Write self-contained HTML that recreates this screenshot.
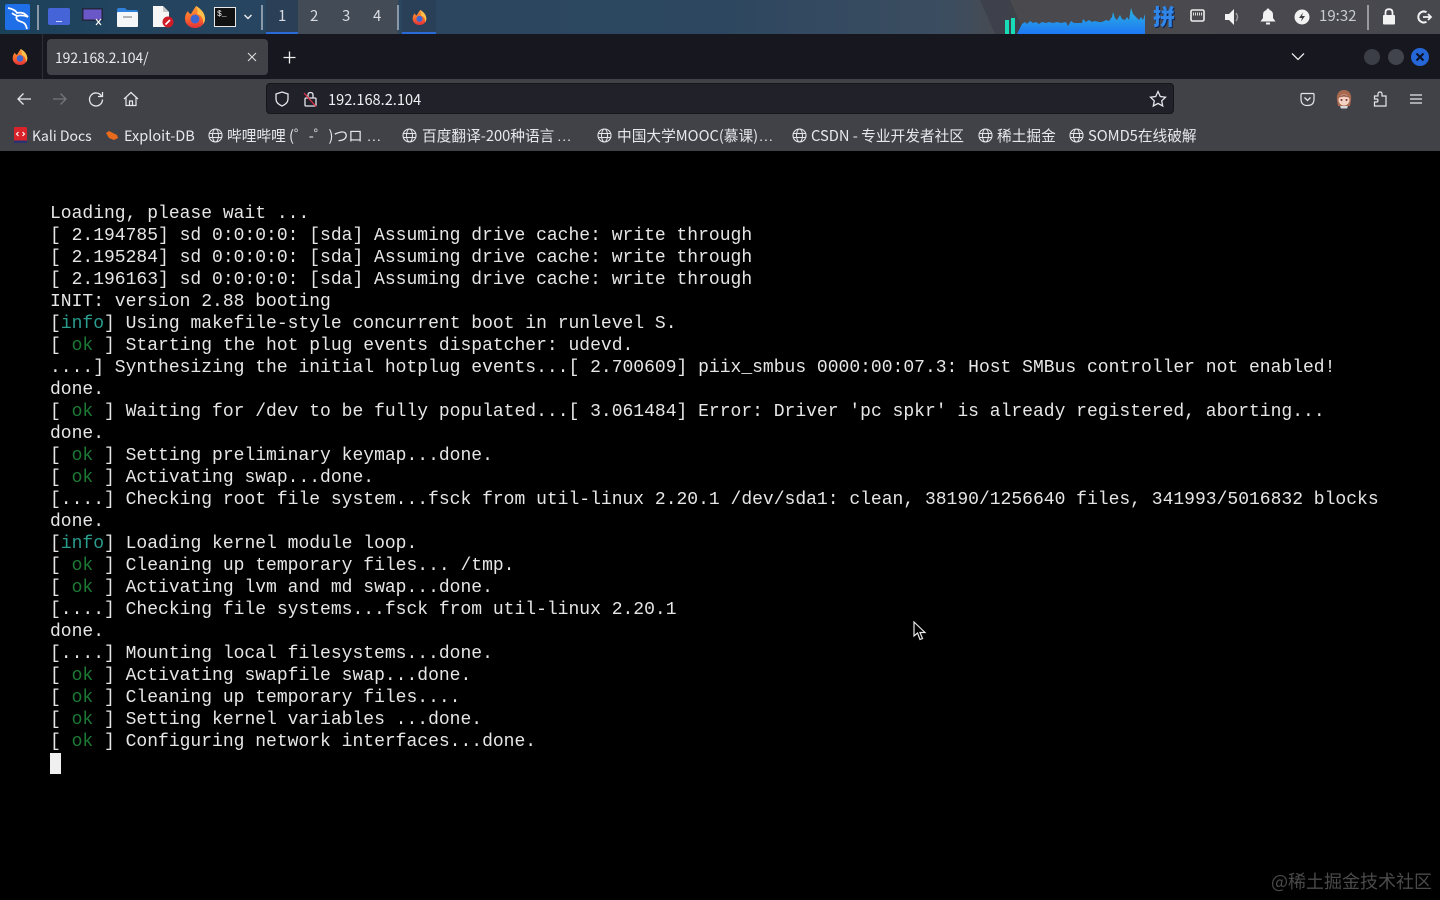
<!DOCTYPE html>
<html lang="zh"><head><meta charset="utf-8"><title>192.168.2.104</title>
<style>
html,body{margin:0;padding:0;background:#000;width:1440px;height:900px;overflow:hidden}
.a{position:absolute}
body{position:relative;font-family:"Noto Sans CJK SC","Liberation Sans",sans-serif;color:#f0f0f2}
#panel{left:0;top:0;width:1440px;height:34px;background:linear-gradient(90deg,#1b4159 0,#22445f 8%,#2b4660 25%,#2d4760 50%,#3c4d60 66%,#4a4a4e 70%,#47474e 100%);overflow:hidden}
#tabs{left:0;top:34px;width:1440px;height:45px;background:#17181f}
#tool{left:0;top:79px;width:1440px;height:72px;background:#414248}
#url{left:266px;top:83px;width:908px;height:31px;background:#202129;border:1px solid #15151a;border-radius:4px;box-sizing:border-box}
.t{white-space:nowrap;line-height:20px}
.bm{top:126px;font-size:14.700px;color:#e8e8ec;white-space:nowrap;line-height:20px}
.bm span{font-family:"Liberation Sans",sans-serif;font-size:14px;letter-spacing:1px;margin-left:1px}
#term{left:50px;top:203px;font:18px/22px "Liberation Mono",monospace;color:#e6e6e6;white-space:pre;margin:0}
#term i{font-style:normal;color:#1c7a36}#term b{font-weight:normal;color:#2a9d8f}
svg{position:absolute;overflow:visible}
</style></head><body>
<div id="panel" class="a">
 <div class="a" style="left:298px;top:0;width:100px;height:34px;background:#434b57"></div>
 <div class="a" style="left:266px;top:0;width:32px;height:34px;background:#2b3f57"></div>
 <div class="a" style="left:402px;top:0;width:34px;height:34px;background:#2a4058"></div>
 <svg style="left:985px;top:0" width="120" height="34" viewBox="0 0 120 34"><path d="M-5 0L25 0L40 34L10 34Z" fill="#3a3d48" opacity=".7"/></svg>
</div>
<div class="a" style="left:266px;top:32px;width:32px;height:2px;background:#2a6ad8"></div>
<div class="a" style="left:402px;top:32px;width:34px;height:2px;background:#2a6ad8"></div>

<svg style="left:5px;top:4px" width="25" height="26" viewBox="0 0 25 26"><rect width="25" height="26" rx="2" fill="#1f6fe8"/><path d="M3 4C8 5 11 7 12 9C16 8 20 9 23 13C19 11 16 11 12 12C10 15 13 17 17 18C20 19 21 21 22 25M7 9C9 11 11 11 12 12" fill="none" stroke="#fff" stroke-width="1.700"/></svg>
<div class="a" style="left:37px;top:5px;width:2px;height:25px;background:#8a98a8"></div>
<div class="a" style="left:48px;top:8px;width:22px;height:17px;background:#4464d8;border-radius:2px"></div>
<div class="a" style="left:56px;top:21px;width:6px;height:1px;background:#cdd6ff"></div>
<svg style="left:82px;top:8px" width="22" height="18" viewBox="0 0 22 18"><rect width="21" height="13" fill="#23283e"/><rect x="1.500" y="1.500" width="18" height="10" fill="#6a58c8"/><path d="M14 11l5 6M19 11l-5 6" stroke="#fff" stroke-width="1.200"/></svg>
<svg style="left:116px;top:7px" width="23" height="20" viewBox="0 0 23 20"><path d="M1 3Q1 1 3 1H9L11 3H20Q22 3 22 5V7H1Z" fill="#2f7fdc"/><rect x="1" y="5" width="21" height="15" rx="1" fill="#f4f6f8"/><rect x="7" y="9" width="9" height="2" fill="#b0b4b8"/></svg>
<svg style="left:152px;top:6px" width="22" height="22" viewBox="0 0 22 22"><path d="M1 0H11L17 6V21H1Z" fill="#f6f6f6"/><path d="M11 0V6H17Z" fill="#c8c8c8"/><circle cx="16" cy="16" r="5.500" fill="#d01c28"/><path d="M13.500 18.500L18 14" stroke="#fff" stroke-width="1.600"/></svg>
<svg width="0" height="0"><defs><linearGradient id="ff" x1="0" y1="0" x2="0" y2="1"><stop offset="0" stop-color="#ff9a3a"/><stop offset=".55" stop-color="#ff6a2a"/><stop offset="1" stop-color="#e0303a"/></linearGradient>
<g id="fx"><path d="M12 0C17 3 21 7 21 13A10 9 0 0 1 1 13C1 9 2.500 6.500 4 5C4.500 7 6 8 7 8C8 6 10 3 12 0Z" fill="url(#ff)"/><path d="M12 0C17 3 21 7 21 13C21 15 20 17 19 18C20 13 17 9 13 8C14 6 13.500 3 12 0Z" fill="#ffc04a"/><circle cx="11" cy="13" r="4.500" fill="#3f66d0"/></g></defs></svg>
<svg style="left:184px;top:6px" width="22" height="22" viewBox="0 0 22 22"><use href="#fx"/></svg>
<div class="a" style="left:214px;top:7px;width:22px;height:20px;background:#111;border:1px solid #e8e8e8;box-sizing:border-box;font:8px/10px 'Liberation Mono',monospace;color:#fff;padding:2px 0 0 2px">$_</div>
<svg style="left:243px;top:13px" width="10" height="8" viewBox="0 0 10 8"><path d="M1.500 2L5 5.500L8.500 2" fill="none" stroke="#e8e8e8" stroke-width="1.500"/></svg>
<div class="a" style="left:261px;top:5px;width:2px;height:25px;background:#8a98a8"></div>
<div class="a t" style="left:278px;top:6px;font-size:15px;color:#d8dce2">1</div>
<div class="a t" style="left:310px;top:6px;font-size:15px;color:#d8dce2">2</div>
<div class="a t" style="left:342px;top:6px;font-size:15px;color:#d8dce2">3</div>
<div class="a t" style="left:373px;top:6px;font-size:15px;color:#d8dce2">4</div>
<div class="a" style="left:397px;top:5px;width:2px;height:25px;background:#8a98a8"></div>
<svg style="left:412px;top:10px" width="15" height="15" viewBox="0 0 22 22"><use href="#fx"/></svg>

<div class="a" style="left:1005px;top:20px;width:4px;height:14px;background:#17dcb8"></div>
<div class="a" style="left:1011px;top:18px;width:4px;height:16px;background:#17dcb8"></div>
<svg style="left:1017px;top:8px" width="128" height="26" viewBox="0 0 128 26"><defs><linearGradient id="g" x1="0" y1="0" x2="0" y2="1"><stop offset="0" stop-color="#2cb4e0"/><stop offset="1" stop-color="#1e78f4"/></linearGradient></defs><path d="M0 26L5 16L8 14L10 16L13 13L16 15L19 14L22 16L25 14L29 15L32 14L36 15L40 14L44 15L49 14L51 18L54 13L57 15L61 15L65 15L66 11L69 14L72 12L75 14L78 13L82 14L85 14L89 12L92 13L95 9L96 4L98 10L100 12L103 7L105 11L108 12L110 9L112 12L114 0L116 6L118 8L120 10L122 12L124 9L126 12L128 6V26Z" fill="url(#g)"/></svg>

<div class="a" style="left:1153px;top:3px;font:900 22px/26px 'Noto Sans CJK SC',sans-serif;color:#2f86e8;text-shadow:1px 1px 0 #10204a">拼</div>
<svg style="left:1190px;top:9px" width="15" height="14" viewBox="0 0 15 14"><rect x="1" y="1" width="13" height="11" rx="1.500" fill="none" stroke="#eee" stroke-width="1.600"/><path d="M3.500 3.500V6.500M5.500 3.500V6.500M7.500 3.500V6.500M9.500 3.500V6.500M11.500 3.500V6.500" stroke="#ddd"/></svg>
<svg style="left:1224px;top:8px" width="18" height="18" viewBox="0 0 18 18"><path d="M1 6H5L10 1V17L5 12H1Z" fill="#f2f2f2"/><path d="M12 5Q15 9 12 13" fill="none" stroke="#999" stroke-width="1.500"/></svg>
<svg style="left:1260px;top:8px" width="16" height="17" viewBox="0 0 16 17"><path d="M8 0.500Q9.500 .5 9.500 2Q13 3 13 7V10L15.500 13.500H.5L3 10V7Q3 3 6.500 2Q6.500 .5 8 .5Z" fill="#f2f2f2"/><rect x="6" y="14.500" width="4" height="2" fill="#f2f2f2"/></svg>
<svg style="left:1294px;top:9px" width="16" height="16" viewBox="0 0 16 16"><circle cx="8" cy="8" r="7.500" fill="#f2f2f2"/><path d="M9 3.500L5 9H8L7 12.500L11 7H8Z" fill="#3a3a40"/></svg>
<div class="a t" style="left:1319px;top:6px;font-size:15px;color:#c8ccd2">19:32</div>
<div class="a" style="left:1367px;top:5px;width:2px;height:25px;background:#9a9a9e"></div>
<svg style="left:1382px;top:8px" width="14" height="17" viewBox="0 0 14 17"><rect x="1" y="7" width="12" height="9.500" rx="1" fill="#f2f2f2"/><path d="M3.500 7V4.500Q3.500 1.200 7 1.200Q10.500 1.200 10.500 4.500V7" fill="none" stroke="#f2f2f2" stroke-width="1.800"/></svg>
<svg style="left:1416px;top:9px" width="16" height="16" viewBox="0 0 16 16"><path d="M10.500 3.200A5.500 5.500 0 1 0 10.500 12.800" fill="none" stroke="#f2f2f2" stroke-width="2"/><path d="M7 8H15M12 5L15 8L12 11" fill="none" stroke="#f2f2f2" stroke-width="1.800"/></svg>

<div id="tabs" class="a"></div>
<svg style="left:12px;top:49px" width="16" height="16" viewBox="0 0 22 22"><use href="#fx"/></svg>
<div class="a" style="left:42px;top:34px;width:1px;height:45px;background:#2e2f36"></div>
<div class="a" style="left:47px;top:39px;width:221px;height:36px;background:#414248;border-radius:4px"></div>
<div class="a t" style="left:55px;top:48px;font-size:14px;color:#e8e8ec;letter-spacing:-.1px">192.168.2.104/</div>
<svg style="left:247px;top:52px" width="10" height="10" viewBox="0 0 10 10"><path d="M1 1L9 9M9 1L1 9" stroke="#ddd" stroke-width="1.100"/></svg>
<svg style="left:283px;top:51px" width="13" height="13" viewBox="0 0 13 13"><path d="M6.500 .5V12.500M.5 6.500H12.500" stroke="#eee" stroke-width="1.300"/></svg>
<svg style="left:1291px;top:52px" width="14" height="10" viewBox="0 0 14 10"><path d="M1 1.500L7 7.500L13 1.500" fill="none" stroke="#e8e8e8" stroke-width="1.300"/></svg>
<div class="a" style="left:1364px;top:49px;width:16px;height:16px;border-radius:50%;background:#3b3e46"></div>
<div class="a" style="left:1388px;top:49px;width:16px;height:16px;border-radius:50%;background:#41444c"></div>
<svg style="left:1411px;top:48px" width="18" height="18" viewBox="0 0 18 18"><circle cx="9" cy="9" r="9" fill="#2566d8"/><path d="M5.500 5.500L12.500 12.500M12.500 5.500L5.500 12.500" stroke="#0c1020" stroke-width="2"/></svg>

<div id="tool" class="a"></div>
<svg style="left:16px;top:92px" width="16" height="14" viewBox="0 0 16 14"><path d="M15 7H2M7.500 1.500L2 7L7.500 12.500" fill="none" stroke="#e6e6ea" stroke-width="1.300"/></svg>
<svg style="left:52px;top:92px" width="16" height="14" viewBox="0 0 16 14"><path d="M1 7H14M8.500 1.500L14 7L8.500 12.500" fill="none" stroke="#74757c" stroke-width="1.300"/></svg>
<svg style="left:88px;top:91px" width="16" height="16" viewBox="0 0 16 16"><path d="M13.500 5A6.500 6.500 0 1 0 14.500 8.500" fill="none" stroke="#e6e6ea" stroke-width="1.300"/><path d="M14.500 1V5.500H10" fill="none" stroke="#e6e6ea" stroke-width="1.300"/></svg>
<svg style="left:123px;top:91px" width="16" height="16" viewBox="0 0 16 16"><path d="M1 8L8 1.500L15 8M3 6.500V14.500H13V6.500M6.500 14.500V10H9.500V14.500" fill="none" stroke="#e6e6ea" stroke-width="1.200"/></svg>
<div id="url" class="a"></div>
<svg style="left:274px;top:91px" width="16" height="16" viewBox="0 0 16 16"><path d="M8 1L14 3V8Q14 12.500 8 15Q2 12.500 2 8V3Z" fill="none" stroke="#e6e6ea" stroke-width="1.300"/></svg>
<svg style="left:303px;top:91px" width="15" height="16" viewBox="0 0 15 16"><rect x="2" y="7" width="11" height="8" rx="1" fill="none" stroke="#e6e6ea" stroke-width="1.300"/><path d="M5 7V4Q5 1.500 7.500 1.500Q10 1.500 10 4V7" fill="none" stroke="#e6e6ea" stroke-width="1.300"/><path d="M1 2L13 15.500" stroke="#e0304a" stroke-width="1.300"/></svg>
<div class="a t" style="left:328px;top:90px;font-size:14.600px;color:#f0f0f4">192.168.2.104</div>
<svg style="left:1149px;top:90px" width="18" height="18" viewBox="0 0 18 18"><path d="M9 1.500L11.300 6.500L16.500 7.200L12.700 10.800L13.700 16L9 13.400L4.300 16L5.300 10.800L1.500 7.200L6.700 6.500Z" fill="none" stroke="#e6e6ea" stroke-width="1.300"/></svg>
<svg style="left:1300px;top:92px" width="15" height="15" viewBox="0 0 15 15"><path d="M2 1.500H13Q14 1.500 14 2.500V7Q14 13.500 7.500 13.500Q1 13.500 1 7V2.500Q1 1.500 2 1.500Z" fill="none" stroke="#e6e6ea" stroke-width="1.200"/><path d="M4.500 5.500L7.500 8.500L10.500 5.500" fill="none" stroke="#e6e6ea" stroke-width="1.300"/></svg>
<svg style="left:1335px;top:90px" width="18" height="19" viewBox="0 0 18 19"><path d="M9 0C14 0 17 4 16 10L15 16L3 16L2 10C1 4 4 0 9 0Z" fill="#a8694e"/><ellipse cx="9" cy="10" rx="5.500" ry="5.500" fill="#f2d2c2"/><path d="M3 8Q9 2 15 8Q9 5 3 8Z" fill="#8a4a38"/><circle cx="6.500" cy="10" r="1" fill="#7a3030"/><circle cx="11.500" cy="10" r="1" fill="#7a3030"/><path d="M5 16H13L12 18.500H6Z" fill="#d8d8d8"/></svg>
<svg style="left:1373px;top:91px" width="15" height="16" viewBox="0 0 15 16"><path d="M1.500 5H5V3Q5 1 7 1Q9 1 9 3V5H13V15H1.500V11H3.500Q5 11 5 9.500Q5 8 3.500 8H1.500Z" fill="none" stroke="#e6e6ea" stroke-width="1.200"/></svg>
<svg style="left:1410px;top:94px" width="12" height="10" viewBox="0 0 12 10"><path d="M0 1H12M0 5H12M0 9H12" stroke="#e6e6ea" stroke-width="1.200"/></svg>

<svg style="left:14px;top:127px" width="13" height="16" viewBox="0 0 13 16"><rect width="13" height="14" rx="1" fill="#d8232a"/><rect y="13.500" width="13" height="2.500" fill="#2a3070"/><path d="M4.500 5L2.500 7L4.500 9M8.500 5L10.500 7L8.500 9" fill="none" stroke="#fff" stroke-width="1.100"/></svg>
<div class="a bm" style="left:32px;font-size:14px">Kali Docs</div>
<svg style="left:105px;top:130px" width="14" height="11" viewBox="0 0 14 11"><path d="M1 3L4 1L12 5L13 8L9 10L4 8Z" fill="#e86a1c"/></svg>
<div class="a bm" style="left:124px;font-size:14.500px">Exploit-DB</div>
<svg width="0" height="0"><defs><g id="gl"><circle cx="7.500" cy="7.500" r="6.500" fill="none" stroke="#e6e6ea" stroke-width="1.100"/><ellipse cx="7.500" cy="7.500" rx="3" ry="6.500" fill="none" stroke="#e6e6ea" stroke-width="1"/><path d="M1 5.500H14M1 9.500H14" stroke="#e6e6ea" stroke-width="1"/></g></defs></svg>
<svg style="left:208px;top:128px" width="15" height="15"><use href="#gl"/></svg>
<div class="a bm" style="left:227px">哔哩哔哩 (゜-゜)つロ <span>...</span></div>
<svg style="left:402px;top:128px" width="15" height="15"><use href="#gl"/></svg>
<div class="a bm" style="left:422px">百度翻译-200种语言<span style="margin-left:3px">...</span></div>
<svg style="left:597px;top:128px" width="15" height="15"><use href="#gl"/></svg>
<div class="a bm" style="left:617px">中国大学MOOC(慕课)<span>...</span></div>
<svg style="left:792px;top:128px" width="15" height="15"><use href="#gl"/></svg>
<div class="a bm" style="left:811px">CSDN - 专业开发者社区</div>
<svg style="left:978px;top:128px" width="15" height="15"><use href="#gl"/></svg>
<div class="a bm" style="left:997px">稀土掘金</div>
<svg style="left:1069px;top:128px" width="15" height="15"><use href="#gl"/></svg>
<div class="a bm" style="left:1088px">SOMD5在线破解</div>

<pre id="term" class="a">Loading, please wait ...
[ 2.194785] sd 0:0:0:0: [sda] Assuming drive cache: write through
[ 2.195284] sd 0:0:0:0: [sda] Assuming drive cache: write through
[ 2.196163] sd 0:0:0:0: [sda] Assuming drive cache: write through
INIT: version 2.88 booting
[<b>info</b>] Using makefile-style concurrent boot in runlevel S.
[ <i>ok</i> ] Starting the hot plug events dispatcher: udevd.
....] Synthesizing the initial hotplug events...[ 2.700609] piix_smbus 0000:00:07.3: Host SMBus controller not enabled!
done.
[ <i>ok</i> ] Waiting for /dev to be fully populated...[ 3.061484] Error: Driver 'pc spkr' is already registered, aborting...
done.
[ <i>ok</i> ] Setting preliminary keymap...done.
[ <i>ok</i> ] Activating swap...done.
[....] Checking root file system...fsck from util-linux 2.20.1 /dev/sda1: clean, 38190/1256640 files, 341993/5016832 blocks
done.
[<b>info</b>] Loading kernel module loop.
[ <i>ok</i> ] Cleaning up temporary files... /tmp.
[ <i>ok</i> ] Activating lvm and md swap...done.
[....] Checking file systems...fsck from util-linux 2.20.1
done.
[....] Mounting local filesystems...done.
[ <i>ok</i> ] Activating swapfile swap...done.
[ <i>ok</i> ] Cleaning up temporary files....
[ <i>ok</i> ] Setting kernel variables ...done.
[ <i>ok</i> ] Configuring network interfaces...done.</pre>
<div class="a" style="left:50px;top:753px;width:11px;height:21px;background:#f0f0f0"></div>
<svg style="left:913px;top:621px" width="14" height="20" viewBox="0 0 14 20"><path d="M1 1V15L4.500 12L7 18.500L9.500 17.500L7 11.500H12Z" fill="#000" stroke="#e8e8e8" stroke-width="1.200"/></svg>
<div class="a" style="left:1271px;top:869px;font-size:18px;line-height:24px;color:#4a4a4a;white-space:nowrap">@稀土掘金技术社区</div>
</body></html>
